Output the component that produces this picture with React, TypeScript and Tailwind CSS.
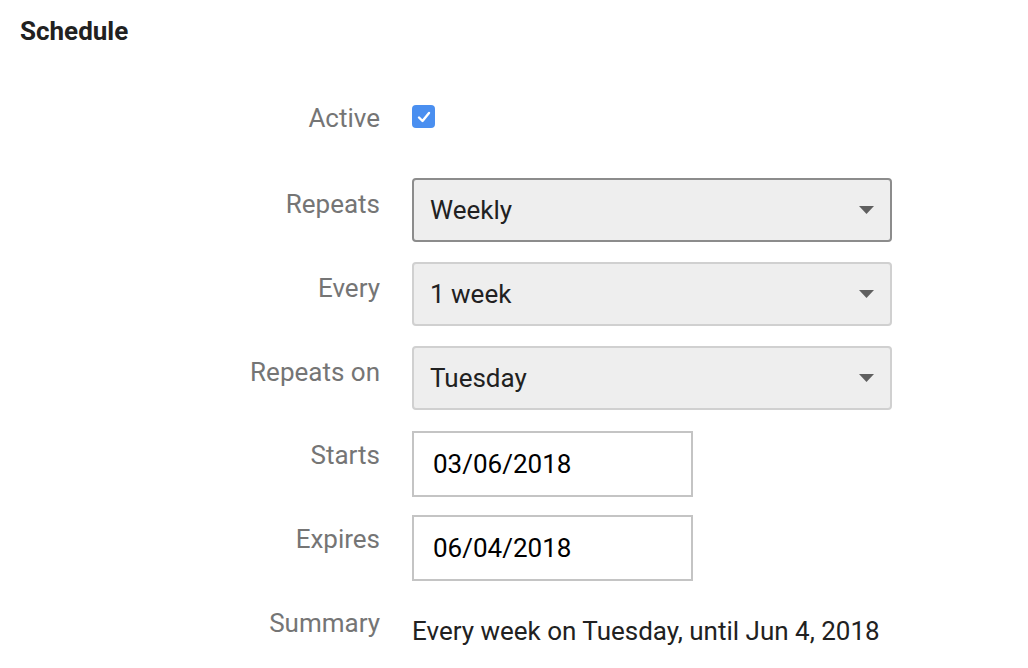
import { useState } from 'react';

const font = { fontFamily: 'Roboto, "Liberation Sans", sans-serif' };

function Label({ text, pt }: { text: string; pt: string }) {
  return (
    <div className={`w-[380px] shrink-0 text-right text-[26px] leading-[32px] text-[#757575] ${pt}`}>{text}</div>
  );
}

function Select({ value, dark }: { value: string; dark?: boolean }) {
  return (
    <div
      className={`w-[480px] h-[64px] rounded-[4px] border-2 bg-[#eeeeee] flex items-center justify-between pl-[16px] pr-[16px] ${
        dark ? 'border-[#8c8c8c]' : 'border-[#d0d0d0]'
      }`}
    >
      <span className="text-[26px] text-[#212121]">{value}</span>
      <svg width="15" height="8" viewBox="0 0 15 8">
        <path d="M0 0 L15 0 L7.5 8 Z" fill="#5f5f5f" />
      </svg>
    </div>
  );
}

function DateInput({ value }: { value: string }) {
  return (
    <div className="w-[281px] h-[66px] border-2 border-[#c4c4c4] bg-white flex items-center pl-[19px]">
      <span className="text-[26px] text-black">{value}</span>
    </div>
  );
}

export default function App() {
  const [active, setActive] = useState(true);

  return (
    <div className="min-h-screen bg-white" style={font}>
      <div className="pl-[20px] pt-[16px] h-[72px]">
        <h1 className="text-[26px] leading-[30px] font-bold text-[#212121]">Schedule</h1>
      </div>

      <div className="mt-[30px] flex flex-col">
        {/* Active */}
        <div className="flex items-start h-[76px]">
          <Label text="Active" pt="pt-[0px]" />
          <div className="ml-[32px] pt-[3px]">
            <button
              onClick={() => setActive(!active)}
              className="w-[23px] h-[23px] rounded-[4px] bg-[#4a8ff0] flex items-center justify-center"
            >
              {active && (
                <svg width="14" height="12" viewBox="0 0 14 12">
                  <path d="M2 6.5 L5.5 10 L12 2" stroke="white" strokeWidth="2.4" fill="none" strokeLinecap="round" strokeLinejoin="round" />
                </svg>
              )}
            </button>
          </div>
        </div>

        <div className="flex items-start">
          <Label text="Repeats" pt="pt-[10px]" />
          <div className="ml-[32px]">
            <Select value="Weekly" dark />
          </div>
        </div>

        <div className="flex items-start mt-[20px]">
          <Label text="Every" pt="pt-[10px]" />
          <div className="ml-[32px]">
            <Select value="1 week" />
          </div>
        </div>

        <div className="flex items-start mt-[20px]">
          <Label text="Repeats on" pt="pt-[10px]" />
          <div className="ml-[32px]">
            <Select value="Tuesday" />
          </div>
        </div>

        <div className="flex items-start mt-[21px]">
          <Label text="Starts" pt="pt-[8px]" />
          <div className="ml-[32px]">
            <DateInput value="03/06/2018" />
          </div>
        </div>

        <div className="flex items-start mt-[18px]">
          <Label text="Expires" pt="pt-[8px]" />
          <div className="ml-[32px]">
            <DateInput value="06/04/2018" />
          </div>
        </div>

        <div className="flex items-start mt-[26px]">
          <Label text="Summary" pt="pt-[0px]" />
          <div className="ml-[32px] pt-[8px] text-[26px] leading-[32px] text-[#212121]">
            Every week on Tuesday, until Jun 4, 2018
          </div>
        </div>
      </div>
    </div>
  );
}
